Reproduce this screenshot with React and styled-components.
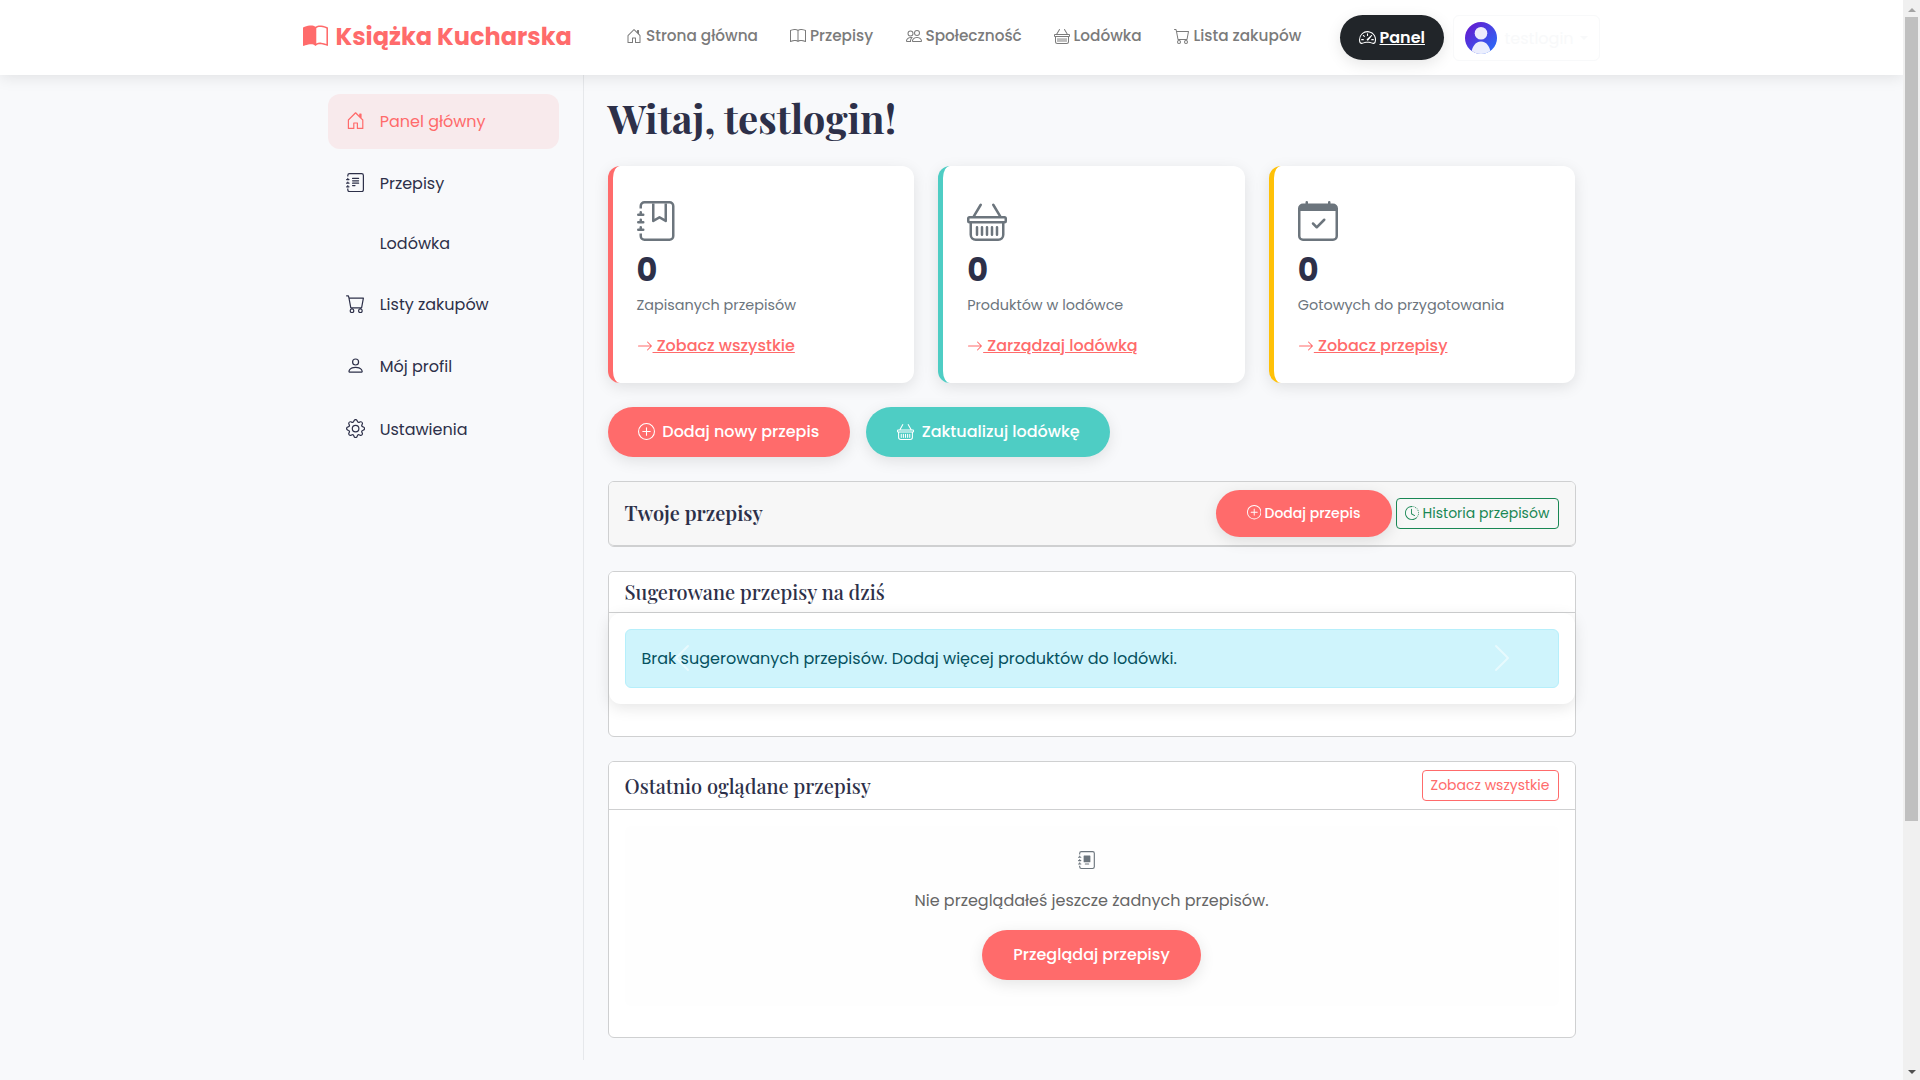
import React from "react";
import styled, { createGlobalStyle } from "styled-components";
import {
  BsArrowRight,
  BsBasket,
  BsBook,
  BsBookHalf,
  BsCalendarCheck,
  BsCart,
  BsChevronLeft,
  BsChevronRight,
  BsClockHistory,
  BsGear,
  BsHouseDoor,
  BsJournalAlbum,
  BsJournalBookmark,
  BsJournalText,
  BsPeople,
  BsPerson,
  BsPlusCircle,
  BsSpeedometer2,
} from "react-icons/bs";

const coral = "#ff6b6b";
const teal = "#4ecdc4";
const navy = "#2d3049";
const shadow = "0 4px 15px rgba(0, 0, 0, 0.1)";

const GlobalStyle = createGlobalStyle`
  * { box-sizing: border-box; }
  body {
    margin: 0;
    height: 1080px;
    overflow: hidden;
    background: #f8f9fb;
    font-family: Poppins, Inter, "Noto Sans", sans-serif;
    font-size: 16px;
    line-height: 24px;
    color: ${navy};
  }
  svg { display: block; flex: none; }
  a { color: inherit; text-decoration: none; }
  button { font-family: inherit; cursor: pointer; }
`;

const Text = styled.span`
  white-space: nowrap;
`;

const Screen = styled.div`
  display: flex;
  width: 1920px;
  height: 1080px;
`;

const Page = styled.div`
  flex: 1;
  display: flex;
  flex-direction: column;
  overflow: hidden;
`;

const Header = styled.header`
  z-index: 1;
  flex: none;
  display: flex;
  height: 75px;
  padding-left: 303px;
  background: #fff;
  box-shadow: 0 2px 15px rgba(0, 0, 0, 0.1);
`;

const Brand = styled.a`
  display: flex;
  align-items: center;
  gap: 7.5px;
  width: 323px;
  height: 72px;
  font-size: 24px;
  font-weight: 700;
  && { color: ${coral}; }
  span { padding-top: 2px; }
`;

const Nav = styled.nav`
  display: flex;
  width: 714px;
  height: 71px;
`;

const NavLink = styled.a`
  display: flex;
  align-items: center;
  gap: 4px;
  width: ${(p) => p.$w}px;
  font-size: 15.3px;
  font-weight: 500;
  && { color: #7b7b7b; }
`;

const Account = styled.div`
  display: flex;
  gap: 8.5px;
  padding-top: 15px;
`;

const PanelButton = styled.a`
  display: flex;
  align-items: center;
  gap: 3.5px;
  width: 104px;
  height: 45px;
  padding-left: 19px;
  border-radius: 23px;
  background: #212529;
  box-shadow: ${shadow};
  font-weight: 600;
  && { color: #fff; }
  span { text-decoration: underline; }
`;

const UserButton = styled.button`
  display: flex;
  align-items: center;
  width: 147.5px;
  height: 46px;
  padding: 0 0 0 11px;
  border: 1px solid #f8f9fa;
  border-radius: 6px;
  background: #fff;
  color: #f8f9fa;
  font-size: 16px;
`;

const UserName = styled(Text)`
  width: 75px;
  margin-left: 8px;
  text-align: left;
`;

const Caret = styled.i`
  border: 4px solid transparent;
  border-top-color: #f8f9fa;
  border-bottom: 0;
`;

const Body = styled.div`
  display: flex;
  height: 985px;
  padding-left: 302.5px;
`;

const Sidebar = styled.aside`
  width: 281px;
  padding: 19px 24px 0 25px;
  border-right: 1px solid #e6e8eb;
`;

const SideLink = styled.a`
  display: flex;
  align-items: center;
  height: 55px;
  margin-bottom: ${(p) => p.$after}px;
  padding-left: 18.2px;
  border-radius: 12px;
  background: ${(p) => (p.$active ? "rgba(255, 107, 107, 0.1)" : "transparent")};
  && { color: ${(p) => (p.$active ? coral : navy)}; }
`;

const SideIcon = styled.span`
  width: 34px;
  padding-bottom: 2.5px;
  font-size: 19.2px;
`;

const Main = styled.main`
  width: 992px;
  padding: 21px 0 0 24px;
`;

const Title = styled.h1`
  height: 44px;
  margin: 0 0 26px;
  font: 700 40px/44px "Playfair Display", "Liberation Serif", serif;
`;

const Stats = styled.section`
  display: grid;
  grid-template-columns: repeat(3, 1fr);
  gap: 24px;
`;

const StatCard = styled.article`
  display: flex;
  flex-direction: column;
  align-items: flex-start;
  height: 217px;
  padding: 35px 24px 0;
  border-left: 5px solid ${(p) => p.$accent};
  border-radius: 12px;
  background: #fff;
  box-shadow: ${shadow};
`;

const StatIcon = styled.div`
  font-size: 40px;
  color: #6c757d;
`;

const StatValue = styled.strong`
  margin-top: 13px;
  font-size: 32px;
  line-height: 32px;
`;

const StatLabel = styled(Text)`
  margin: 7px 0 17px;
  font-size: 14.4px;
  color: #6c757d;
`;

const StatLink = styled.a`
  display: flex;
  align-items: center;
  font-weight: 500;
  && { color: ${coral}; }
  svg { font-size: 16px; }
  span {
    white-space: pre;
    text-decoration: underline;
  }
`;

const Actions = styled.div`
  display: flex;
  gap: 16px;
  margin: 24px 0;
`;

const Pill = styled.button`
  display: flex;
  align-items: center;
  justify-content: center;
  gap: ${(p) => (p.$small ? 3.5 : 7.5)}px;
  width: ${(p) => p.$w}px;
  height: ${(p) => (p.$small ? 47 : 50)}px;
  padding: 0 0 ${(p) => (p.$small ? 0 : 1)}px ${(p) => p.$nudge || 0}px;
  border: 0;
  border-radius: 25px;
  background: ${(p) => p.$bg || coral};
  box-shadow: ${shadow};
  color: #fff;
  font-size: ${(p) => (p.$small ? 14 : 16)}px;
  font-weight: 500;
  svg { font-size: ${(p) => (p.$small ? 14.4 : 17)}px; margin-bottom: ${(p) => (p.$small ? 2 : 0)}px; }
`;

const OutlineButton = styled.button`
  display: flex;
  align-items: center;
  justify-content: center;
  gap: 4px;
  width: ${(p) => p.$w}px;
  height: 31px;
  padding: 0;
  border: 1px solid ${(p) => p.$color};
  border-radius: 4px;
  background: transparent;
  color: ${(p) => p.$color};
  font-size: 14px;
  svg { font-size: 14px; margin-bottom: 2px; }
`;

const Panel = styled.section`
  height: ${(p) => p.$h}px;
  margin-bottom: 24px;
  border: 1px solid #cfd0d1;
  border-radius: 6px;
  background: #fff;
`;

const PanelHead = styled.div`
  display: flex;
  align-items: center;
  justify-content: space-between;
  height: ${(p) => p.$h}px;
  padding: 0 16px;
  border-bottom: 1px solid #cfd0d1;
  border-radius: ${(p) => (p.$filled ? "5px" : "5px 5px 0 0")};
  background: ${(p) => (p.$filled ? "#f7f7f7" : "#fff")};
`;

const PanelTitle = styled.h5`
  margin: 0 0 ${(p) => p.$lift || 0}px;
  font: ${(p) => p.$weight || 500} 20px/24px "Playfair Display", "Liberation Serif", serif;
`;

const ButtonGroup = styled.div`
  display: flex;
  align-items: center;
  gap: 4px;
`;

const Carousel = styled.div`
  position: relative;
  height: 91px;
  padding: 16px;
  border-radius: 12px;
  background: #fff;
  box-shadow: ${shadow};
`;

const Alert = styled.div`
  display: flex;
  align-items: center;
  height: 59px;
  padding-left: 16px;
  border: 1px solid #b6effb;
  border-radius: 6px;
  background: #cff4fc;
  color: #055160;
`;

const CarouselControl = styled.span`
  position: absolute;
  top: 29px;
  ${(p) => p.$side}: 57px;
  font-size: 32px;
  color: rgba(255, 255, 255, 0.5);
`;

const Empty = styled.div`
  display: flex;
  flex-direction: column;
  align-items: center;
  height: 180px;
  margin: 16px;
  padding-top: 25px;
  border-radius: 6px;
  background: #fefefe;
  color: #666;
  > svg { margin-right: 8.5px; font-size: 18px; color: #6c757d; }
  > span { margin: 20px 0 17px; }
`;

const Scrollbar = styled.div`
  display: flex;
  flex-direction: column;
  align-items: center;
  justify-content: space-between;
  width: 17px;
  height: 1080px;
  padding: 8px 0 6px;
  background: #f0f0f0;
`;

const ScrollTop = styled.div`
  display: flex;
  flex-direction: column;
  align-items: center;
  gap: 5px;
`;

const Thumb = styled.div`
  width: 13px;
  height: 804px;
  background: #c0c0c0;
`;

const Arrow = styled.i`
  border: 4px solid transparent;
  ${(p) => (p.$up ? "border-bottom: 4px solid #a3a3a3; border-top: 0;" : "border-top: 4px solid #505050; border-bottom: 0;")}
`;

const navItems = [
  [BsHouseDoor, "Strona główna", 164],
  [BsBook, "Przepisy", 115.5],
  [BsPeople, "Społeczność", 148],
  [BsBasket, "Lodówka", 120],
  [BsCart, "Lista zakupów", 150],
];

const sideItems = [
  [BsHouseDoor, "Panel główny", 7],
  [BsJournalText, "Przepisy", 5],
  [null, "Lodówka", 6],
  [BsCart, "Listy zakupów", 7],
  [BsPerson, "Mój profil", 8],
  [BsGear, "Ustawienia", 0],
];

const stats = [
  [BsJournalBookmark, coral, "Zapisanych przepisów", "Zobacz wszystkie"],
  [BsBasket, teal, "Produktów w lodówce", "Zarządzaj lodówką"],
  [BsCalendarCheck, "#ffc107", "Gotowych do przygotowania", "Zobacz przepisy"],
];

function Avatar() {
  return (
    <svg width="32" height="32" viewBox="0 0 32 32">
      <defs>
        <linearGradient id="avatar" x1="0" y1="0" x2="1" y2="1">
          <stop offset="0" stopColor="#6a11cb" />
          <stop offset="1" stopColor="#2575fc" />
        </linearGradient>
        <clipPath id="round">
          <circle cx="16" cy="16" r="16" />
        </clipPath>
      </defs>
      <g clipPath="url(#round)">
        <rect width="32" height="32" fill="url(#avatar)" />
        <circle cx="16" cy="11.3" r="6.3" fill="#fff" opacity="0.9" />
        <path d="M6.5 32c0-7 4-12.5 9.5-12.5s9.5 5.5 9.5 12.5z" fill="#fff" opacity="0.9" />
      </g>
    </svg>
  );
}

export default function App() {
  return (
    <>
      <GlobalStyle />
      <Screen>
        <Page>
          <Header>
            <Brand href="#">
              <BsBookHalf size={25} />
              <Text>Książka Kucharska</Text>
            </Brand>
            <Nav>
              {navItems.map(([Icon, label, w]) => (
                <NavLink href="#" key={label} $w={w}>
                  <Icon size={16} />
                  <Text>{label}</Text>
                </NavLink>
              ))}
            </Nav>
            <Account>
              <PanelButton href="#">
                <BsSpeedometer2 size={17} />
                <Text>Panel</Text>
              </PanelButton>
              <UserButton>
                <Avatar />
                <UserName>testlogin</UserName>
                <Caret />
              </UserButton>
            </Account>
          </Header>
          <Body>
            <Sidebar>
              {sideItems.map(([Icon, label, after], i) => (
                <SideLink href="#" key={label} $active={i === 0} $after={after}>
                  <SideIcon>{Icon && <Icon />}</SideIcon>
                  <Text>{label}</Text>
                </SideLink>
              ))}
            </Sidebar>
            <Main>
              <Title>Witaj, testlogin!</Title>
              <Stats>
                {stats.map(([Icon, accent, label, link]) => (
                  <StatCard key={label} $accent={accent}>
                    <StatIcon>
                      <Icon />
                    </StatIcon>
                    <StatValue>0</StatValue>
                    <StatLabel>{label}</StatLabel>
                    <StatLink href="#">
                      <BsArrowRight />
                      <Text>{" " + link}</Text>
                    </StatLink>
                  </StatCard>
                ))}
              </Stats>
              <Actions>
                <Pill $w={242}>
                  <BsPlusCircle />
                  <Text>Dodaj nowy przepis</Text>
                </Pill>
                <Pill $w={244} $bg={teal} $nudge={2}>
                  <BsBasket />
                  <Text>Zaktualizuj lodówkę</Text>
                </Pill>
              </Actions>
              <Panel $h={66}>
                <PanelHead $h={64} $filled>
                  <PanelTitle $weight={600} $lift={2}>Twoje przepisy</PanelTitle>
                  <ButtonGroup>
                    <Pill $w={176} $small>
                      <BsPlusCircle />
                      <Text>Dodaj przepis</Text>
                    </Pill>
                    <OutlineButton $w={163} $color="#198754">
                      <BsClockHistory />
                      <Text>Historia przepisów</Text>
                    </OutlineButton>
                  </ButtonGroup>
                </PanelHead>
              </Panel>
              <Panel $h={166}>
                <PanelHead $h={41}>
                  <PanelTitle>Sugerowane przepisy na dziś</PanelTitle>
                </PanelHead>
                <Carousel>
                  <Alert>
                    <Text>Brak sugerowanych przepisów. Dodaj więcej produktów do lodówki.</Text>
                  </Alert>
                  <CarouselControl $side="left">
                    <BsChevronLeft />
                  </CarouselControl>
                  <CarouselControl $side="right">
                    <BsChevronRight />
                  </CarouselControl>
                </Carousel>
              </Panel>
              <Panel $h={277}>
                <PanelHead $h={48}>
                  <PanelTitle>Ostatnio oglądane przepisy</PanelTitle>
                  <OutlineButton $w={137} $color={coral}>
                    <Text>Zobacz wszystkie</Text>
                  </OutlineButton>
                </PanelHead>
                <Empty>
                  <BsJournalAlbum />
                  <Text>Nie przeglądałeś jeszcze żadnych przepisów.</Text>
                  <Pill $w={219}>
                    <Text>Przeglądaj przepisy</Text>
                  </Pill>
                </Empty>
              </Panel>
            </Main>
          </Body>
        </Page>
        <Scrollbar>
          <ScrollTop>
            <Arrow $up />
            <Thumb />
          </ScrollTop>
          <Arrow />
        </Scrollbar>
      </Screen>
    </>
  );
}
